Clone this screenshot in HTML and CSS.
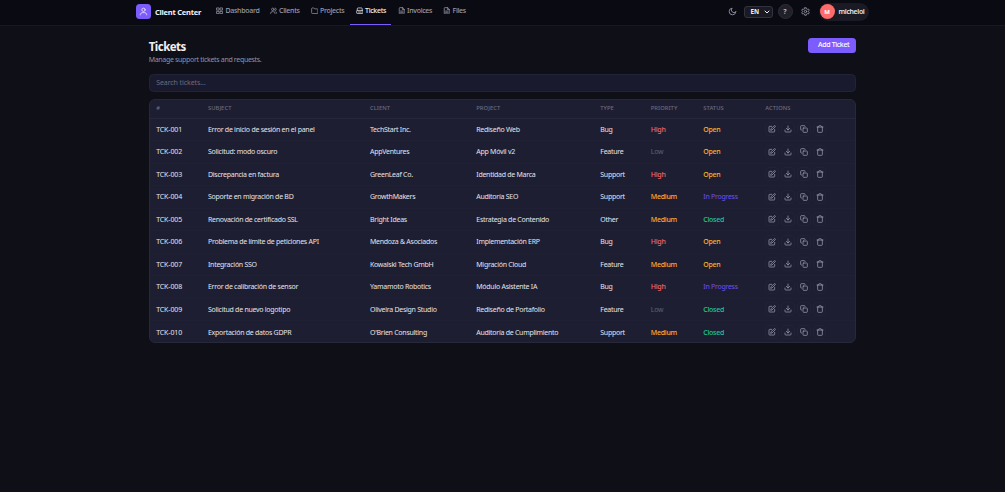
FILE: index.html
```html
<!DOCTYPE html>
<html lang="en">
<head>
<meta charset="utf-8">
<title>Client Center – Tickets</title>
<link rel="stylesheet" href="styles.css">
</head>
<body>
<svg class="sprite" aria-hidden="true">
  <symbol id="user" viewBox="0 0 24 24"><circle cx="12" cy="7.5" r="4.5"/><path d="M3.5 21v-1a6 6 0 0 1 6-5h5a6 6 0 0 1 6 5v1"/></symbol>
  <symbol id="grid" viewBox="0 0 24 24"><path d="M3 3h7v7H3zM14 3h7v7h-7zM3 14h7v7H3zM14 14h7v7h-7z"/></symbol>
  <symbol id="users" viewBox="0 0 24 24"><circle cx="9" cy="7.5" r="4"/><path d="M2 21v-1a5 5 0 0 1 5-5h4a5 5 0 0 1 5 5v1M16 3.5a4 4 0 0 1 0 8M19 15.5a5 5 0 0 1 3 4.5v1"/></symbol>
  <symbol id="folder" viewBox="0 0 24 24"><path d="M2 5a2 2 0 0 1 2-2h5l3 3h8a2 2 0 0 1 2 2v11a2 2 0 0 1-2 2H4a2 2 0 0 1-2-2z"/></symbol>
  <symbol id="ticket" viewBox="0 0 24 24"><path d="M4 11V6a3 3 0 0 1 3-3h10a3 3 0 0 1 3 3v5M2 13a2 2 0 0 1 2-2h16a2 2 0 0 1 2 2v6a2 2 0 0 1-2 2H4a2 2 0 0 1-2-2zM7 16h10"/></symbol>
  <symbol id="file" viewBox="0 0 24 24"><path d="M14 2H6a2 2 0 0 0-2 2v16a2 2 0 0 0 2 2h12a2 2 0 0 0 2-2V8zM14 2v6h6M8 13h8M8 17h8"/></symbol>
  <symbol id="moon" viewBox="0 0 24 24"><path d="M21 13A9 9 0 1 1 11 3a7 7 0 0 0 10 10z"/></symbol>
  <symbol id="gear" viewBox="0 0 24 24"><circle cx="12" cy="12" r="3.2"/><path d="M10 2h4l.7 3 2.2 1.2 3-.9 2 3.4L19.700 11v2l2.200 2.300-2 3.400-3-.9-2.200 1.200L14 22h-4l-.7-3-2.200-1.200-3 .9-2-3.400L4.300 13v-2L2.100 8.700l2-3.400 3 .9L9.300 5z"/></symbol>
  <symbol id="edit" viewBox="0 0 24 24"><path d="M11 4H5a2 2 0 0 0-2 2v13a2 2 0 0 0 2 2h13a2 2 0 0 0 2-2v-6M18.500 2.500a2.100 2.100 0 0 1 3 3L12 15l-4 1 1-4z"/></symbol>
  <symbol id="download" viewBox="0 0 24 24"><path d="M3 15v4a2 2 0 0 0 2 2h14a2 2 0 0 0 2-2v-4M7 10l5 5 5-5M12 15V3"/></symbol>
  <symbol id="copy" viewBox="0 0 24 24"><rect x="9" y="9" width="13" height="13" rx="2"/><path d="M5 15H4a2 2 0 0 1-2-2V4a2 2 0 0 1 2-2h9a2 2 0 0 1 2 2v1"/></symbol>
  <symbol id="trash" viewBox="0 0 24 24"><path d="M3 6h18M19 6v14a2 2 0 0 1-2 2H7a2 2 0 0 1-2-2V6M8 6V4a2 2 0 0 1 2-2h4a2 2 0 0 1 2 2v2"/></symbol>
  <symbol id="chevron" viewBox="0 0 24 24"><path d="M4 8l8 8 8-8"/></symbol>
</svg>

<header class="topbar">
  <div class="brand"><span class="logo"><svg><use href="#user"/></svg></span><span>Client Center</span></div>
  <nav class="nav">
    <a class="dashboard"><svg><use href="#grid"/></svg>Dashboard</a>
    <a class="clients"><svg><use href="#users"/></svg>Clients</a>
    <a class="projects"><svg><use href="#folder"/></svg>Projects</a>
    <a class="tickets active"><svg><use href="#ticket"/></svg>Tickets</a>
    <a class="invoices"><svg><use href="#file"/></svg>Invoices</a>
    <a class="files"><svg><use href="#file"/></svg>Files</a>
  </nav>
  <div class="tools">
    <svg class="tool-icon"><use href="#moon"/></svg>
    <span class="lang">EN<svg><use href="#chevron"/></svg></span>
    <span class="help">?</span>
    <svg class="tool-icon"><use href="#gear"/></svg>
    <span class="profile"><span class="avatar">M</span>micheloi</span>
  </div>
</header>

<main class="page">
  <div class="heading">
    <div><h1>Tickets</h1><p>Manage support tickets and requests.</p></div>
    <button class="add">Add Ticket</button>
  </div>
  <div class="search">Search tickets...</div>
  <section class="table" id="tickets">
    <div class="row head"><span>#</span><span>SUBJECT</span><span>CLIENT</span><span>PROJECT</span><span>TYPE</span><span>PRIORITY</span><span>STATUS</span><span>ACTIONS</span></div>
  </section>
</main>
<script src="app.js"></script>
</body>
</html>
```
FILE: styles.css
```css
* { box-sizing: border-box; }
body {
  margin: 0;
  height: 492px;
  overflow: hidden;
  background: #0f0f17;
  color: #e4e4ec;
  font: 7px/10px "Noto Sans", "Open Sans", sans-serif;
}
.sprite { position: absolute; width: 0; height: 0; }
svg { fill: none; stroke: currentColor; stroke-width: 2.300; stroke-linecap: round; stroke-linejoin: round; flex: none; }

.topbar {
  display: flex;
  height: 26px;
  padding: 0 136.500px 2px 136px;
  align-items: center;
  background: #0a0a12;
  border-bottom: 1px solid #181822;
}
.brand { display: flex; align-items: center; gap: 4px; width: 74.500px; font-size: 7.500px; font-weight: 700; color: #f3f3f8; white-space: nowrap; letter-spacing: -.23px; }
.logo { display: grid; place-items: center; width: 15px; height: 15px; border-radius: 3.500px; background: #7c5cfc; color: #e5dfff; }
.logo svg { width: 9px; height: 9px; }
.nav { display: flex; height: 25px; margin-bottom: -2px; }
.nav a { display: flex; align-items: center; gap: 2px; padding: 0 0 3px 5.500px; color: #9c9cab; font-weight: 500; font-size: 7px; letter-spacing: -.3px; white-space: nowrap; border-bottom: 1px solid transparent; }
.nav svg { width: 7.500px; height: 7.500px; }
.dashboard { width: 53.500px; }
.clients { width: 41px; }
.projects { width: 45px; }
.tickets { width: 41px; }
.invoices { width: 45.500px; margin-left: 1px; }
.files { width: 35px; }
.nav .active { color: #f0f0f5; border-color: #7c5cfc; }
.tools { display: flex; align-items: center; margin-left: auto; color: #9696a6; }
.tool-icon { width: 9px; height: 9px; }
.lang { display: flex; align-items: center; justify-content: space-between; width: 29px; height: 12px; margin: 0 5px 0 7px; padding: 0 2px 0 6px; border: 1px solid #33333f; border-radius: 3px; background: #1a1a24; color: #f0f0f5; font-size: 6.300px; font-weight: 700; }
.lang svg { width: 6px; height: 6px; stroke-width: 4; }
.help { display: grid; place-items: center; width: 15px; height: 15px; margin-right: 8px; border: 1px solid #2d2d39; border-radius: 50%; background: #20202a; color: #b2b2c0; font-size: 7px; font-weight: 700; }
.profile { display: flex; align-items: center; gap: 4px; width: 50px; height: 18px; margin-left: 9px; padding-left: 1px; border-radius: 9px; background: #1a1a24; color: #e8e8f0; font-size: 6.900px; font-weight: 600; letter-spacing: -.33px; }
.avatar { display: grid; place-items: center; width: 15px; height: 15px; border-radius: 50%; background: #ff6b6b; color: #fff; font-size: 6px; font-weight: 700; }

.page { width: 707.500px; margin: 0 0 0 148.700px; padding-top: 12px; }
.heading { display: flex; justify-content: space-between; height: 36px; }
.heading h1 { margin: 0; font-size: 11.500px; line-height: 17px; font-weight: 700; letter-spacing: -.52px; color: #f0f0f5; }
.heading p { margin: 0; color: #9292a3; font-size: 7px; letter-spacing: -.32px; }
.add { width: 48px; height: 15px; padding: 0 0 1px 3px; border: 0; border-radius: 3.500px; background: #7c5cfc; color: #fff; font: 500 7px/10px "Noto Sans", sans-serif; letter-spacing: -.35px; }
.search { display: flex; align-items: center; height: 18px; padding-left: 6.500px; border: 1px solid #232337; border-radius: 4.500px; background: #1a1a2e; color: #6b6b7c; letter-spacing: -.08px; }

.table { height: 244px; margin-top: 7px; border: 1px solid #28283b; border-radius: 6px; background: #1e1e32; overflow: hidden; }
.row { display: grid; grid-template-columns: 51.800px 162px 106.300px 124px 50.500px 52.500px 62px 1fr; align-items: center; height: 22.500px; padding: 1px 0 0 6.500px; border-bottom: 1px solid #202035; white-space: nowrap; letter-spacing: -.27px; }
.row > :first-child { letter-spacing: -.12px; }
.row:last-child { border-bottom: 0; }
.row.head { height: 18.500px; padding: 0 0 1px 6.500px; border-color: #28283b; color: #6b6b7e; font-size: 5.800px; font-weight: 500; letter-spacing: .05px; }
.high, .medium, .open, .closed { font-weight: 500; }
.high { color: #ff6161; }
.medium, .open { color: #f5b524; }
.low { color: #606072; }
.progress { color: #6d4ff0; }
.closed { color: #20c794; }
.actions { display: flex; gap: 2px; padding-bottom: 1px; color: #9a9aad; letter-spacing: 0; }
.actions span { display: grid; place-items: center; width: 13.800px; height: 13.800px; border: 1px solid #222237; border-radius: 4px; }
.actions svg { width: 8px; height: 8px; }
```
FILE: app.js
```js
const tickets = [
  ["TCK-001", "Error de inicio de sesión en el panel", "TechStart Inc.", "Rediseño Web", "Bug", "High", "Open"],
  ["TCK-002", "Solicitud: modo oscuro", "AppVentures", "App Móvil v2", "Feature", "Low", "Open"],
  ["TCK-003", "Discrepancia en factura", "GreenLeaf Co.", "Identidad de Marca", "Support", "High", "Open"],
  ["TCK-004", "Soporte en migración de BD", "GrowthMakers", "Auditoría SEO", "Support", "Medium", "In Progress"],
  ["TCK-005", "Renovación de certificado SSL", "Bright Ideas", "Estrategia de Contenido", "Other", "Medium", "Closed"],
  ["TCK-006", "Problema de límite de peticiones API", "Mendoza & Asociados", "Implementación ERP", "Bug", "High", "Open"],
  ["TCK-007", "Integración SSO", "Kowalski Tech GmbH", "Migración Cloud", "Feature", "Medium", "Open"],
  ["TCK-008", "Error de calibración de sensor", "Yamamoto Robotics", "Módulo Asistente IA", "Bug", "High", "In Progress"],
  ["TCK-009", "Solicitud de nuevo logotipo", "Oliveira Design Studio", "Rediseño de Portafolio", "Feature", "Low", "Closed"],
  ["TCK-010", "Exportación de datos GDPR", "O'Brien Consulting", "Auditoría de Cumplimiento", "Support", "Medium", "Closed"]
];
const table = document.getElementById("tickets");
for (const ticket of tickets) {
  const row = document.createElement("div");
  row.className = "row";
  ticket.forEach((value, i) => {
    const cell = document.createElement("span");
    cell.textContent = value;
    if (i > 4) cell.className = value.toLowerCase().split(" ").pop();
    row.append(cell);
  });
  const actions = document.createElement("div");
  actions.className = "actions";
  actions.innerHTML = ["edit", "download", "copy", "trash"].map(n => `<span><svg><use href="#${n}"/></svg></span>`).join("");
  row.append(actions);
  table.append(row);
}
```
